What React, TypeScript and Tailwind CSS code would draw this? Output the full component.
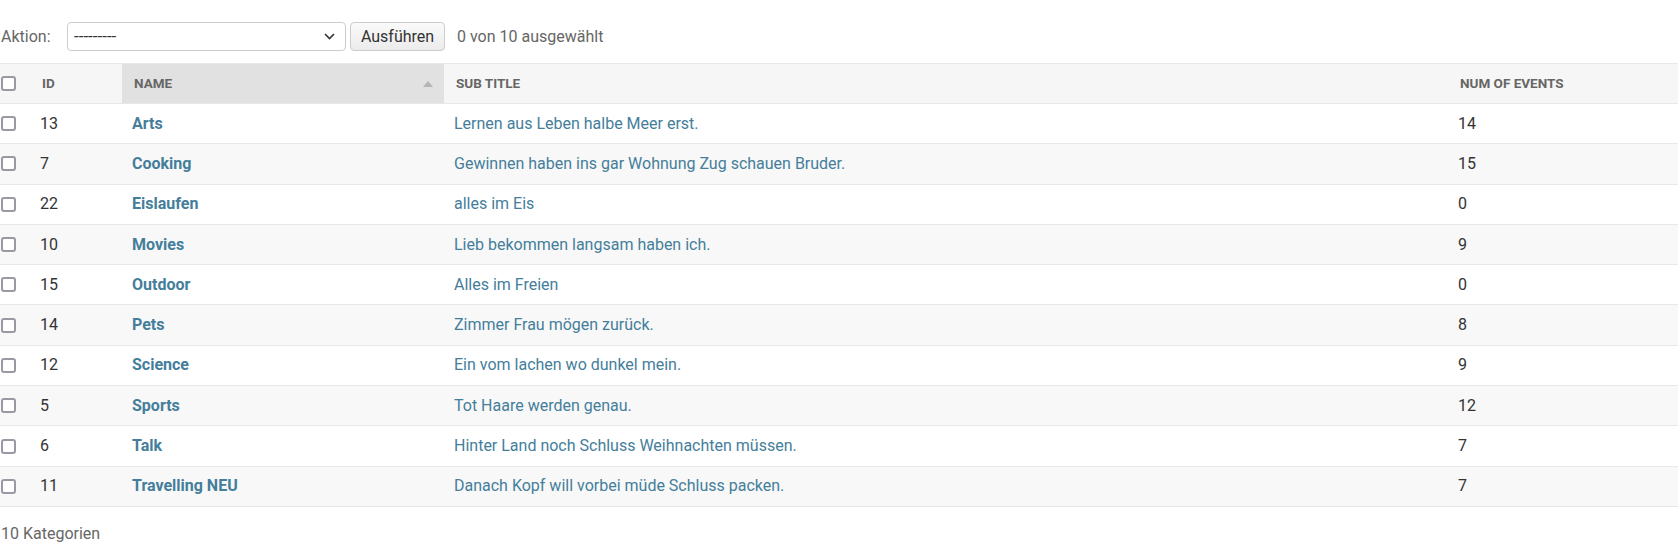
import React from "react";

const rows = [
  { id: 13, name: "Arts", sub: "Lernen aus Leben halbe Meer erst.", num: 14 },
  { id: 7, name: "Cooking", sub: "Gewinnen haben ins gar Wohnung Zug schauen Bruder.", num: 15 },
  { id: 22, name: "Eislaufen", sub: "alles im Eis", num: 0 },
  { id: 10, name: "Movies", sub: "Lieb bekommen langsam haben ich.", num: 9 },
  { id: 15, name: "Outdoor", sub: "Alles im Freien", num: 0 },
  { id: 14, name: "Pets", sub: "Zimmer Frau mögen zurück.", num: 8 },
  { id: 12, name: "Science", sub: "Ein vom lachen wo dunkel mein.", num: 9 },
  { id: 5, name: "Sports", sub: "Tot Haare werden genau.", num: 12 },
  { id: 6, name: "Talk", sub: "Hinter Land noch Schluss Weihnachten müssen.", num: 7 },
  { id: 11, name: "Travelling NEU", sub: "Danach Kopf will vorbei müde Schluss packen.", num: 7 },
];

function Box() {
  return <div className="w-[15px] h-[15px] rounded-[3px] border-2 border-[#9a99a3] bg-white" />;
}

export default function App() {
  return (
    <div className="w-[1678px] h-[546px] bg-white text-[#333] overflow-hidden" style={{ fontFamily: "Roboto, 'Liberation Sans', sans-serif" }}>
      <div className="flex items-center h-[29px] mt-[22px] text-[16px]">
        <span className="ml-[1px] text-[#666] w-[66px]">Aktion:</span>
        <div className="w-[279px] h-[29px] border border-[#ccc] rounded-[4px] flex items-center justify-between pl-[6px] pr-[10px] text-[17px] text-[#333]">
          <span className="leading-none">---------</span>
          <svg width="11" height="7" viewBox="0 0 11 7"><path d="M1 1l4.5 4.5L10 1" stroke="#333" strokeWidth="1.6" fill="none" /></svg>
        </div>
        <div className="ml-[4px] w-[95px] h-[29px] border border-[#ccc] rounded-[4px] bg-gradient-to-b from-[#fafafa] to-[#ececec] flex items-center justify-center text-[16px] text-[#333]">
          Ausführen
        </div>
        <span className="ml-[12px] text-[#666]">0 von 10 ausgewählt</span>
      </div>
      <table className="mt-[12px] w-full border-collapse table-fixed">
        <colgroup>
          <col className="w-[30px]" />
          <col className="w-[92px]" />
          <col className="w-[322px]" />
          <col className="w-[1004px]" />
          <col />
        </colgroup>
        <thead>
          <tr className="h-[40px] bg-[#f6f6f6] border-t border-b border-[#e8e8e8] text-[13.5px] font-bold uppercase text-[#666]">
            <th className="pl-[1px] text-left"><Box /></th>
            <th className="pl-[12px] text-left">ID</th>
            <th className="pl-[12px] text-left bg-[#e1e1e1]">
              <div className="flex items-center justify-between pr-[11px]">
                <span>Name</span>
                <svg width="10" height="6" viewBox="0 0 10 6"><path d="M0 6L5 0L10 6Z" fill="#b5b5b5" /></svg>
              </div>
            </th>
            <th className="pl-[12px] text-left">Sub title</th>
            <th className="pl-[12px] text-left">Num of events</th>
          </tr>
        </thead>
        <tbody className="text-[16px]">
          {rows.map((r, i) => (
            <tr key={r.id} className={`h-[40.3px] border-b border-[#e8e8e8] ${i % 2 === 1 ? "bg-[#f8f8f8]" : "bg-white"}`}>
              <td className="pl-[1px]"><Box /></td>
              <td className="pl-[10px] text-[#333]">{r.id}</td>
              <td className="pl-[10px] font-bold text-[#447e9b]">{r.name}</td>
              <td className="pl-[10px] text-[#447e9b]">{r.sub}</td>
              <td className="pl-[10px] text-[#333]">{r.num}</td>
            </tr>
          ))}
        </tbody>
      </table>
      <div className="ml-[1px] mt-[15px] text-[16px] text-[#666]">10 Kategorien</div>
    </div>
  );
}
